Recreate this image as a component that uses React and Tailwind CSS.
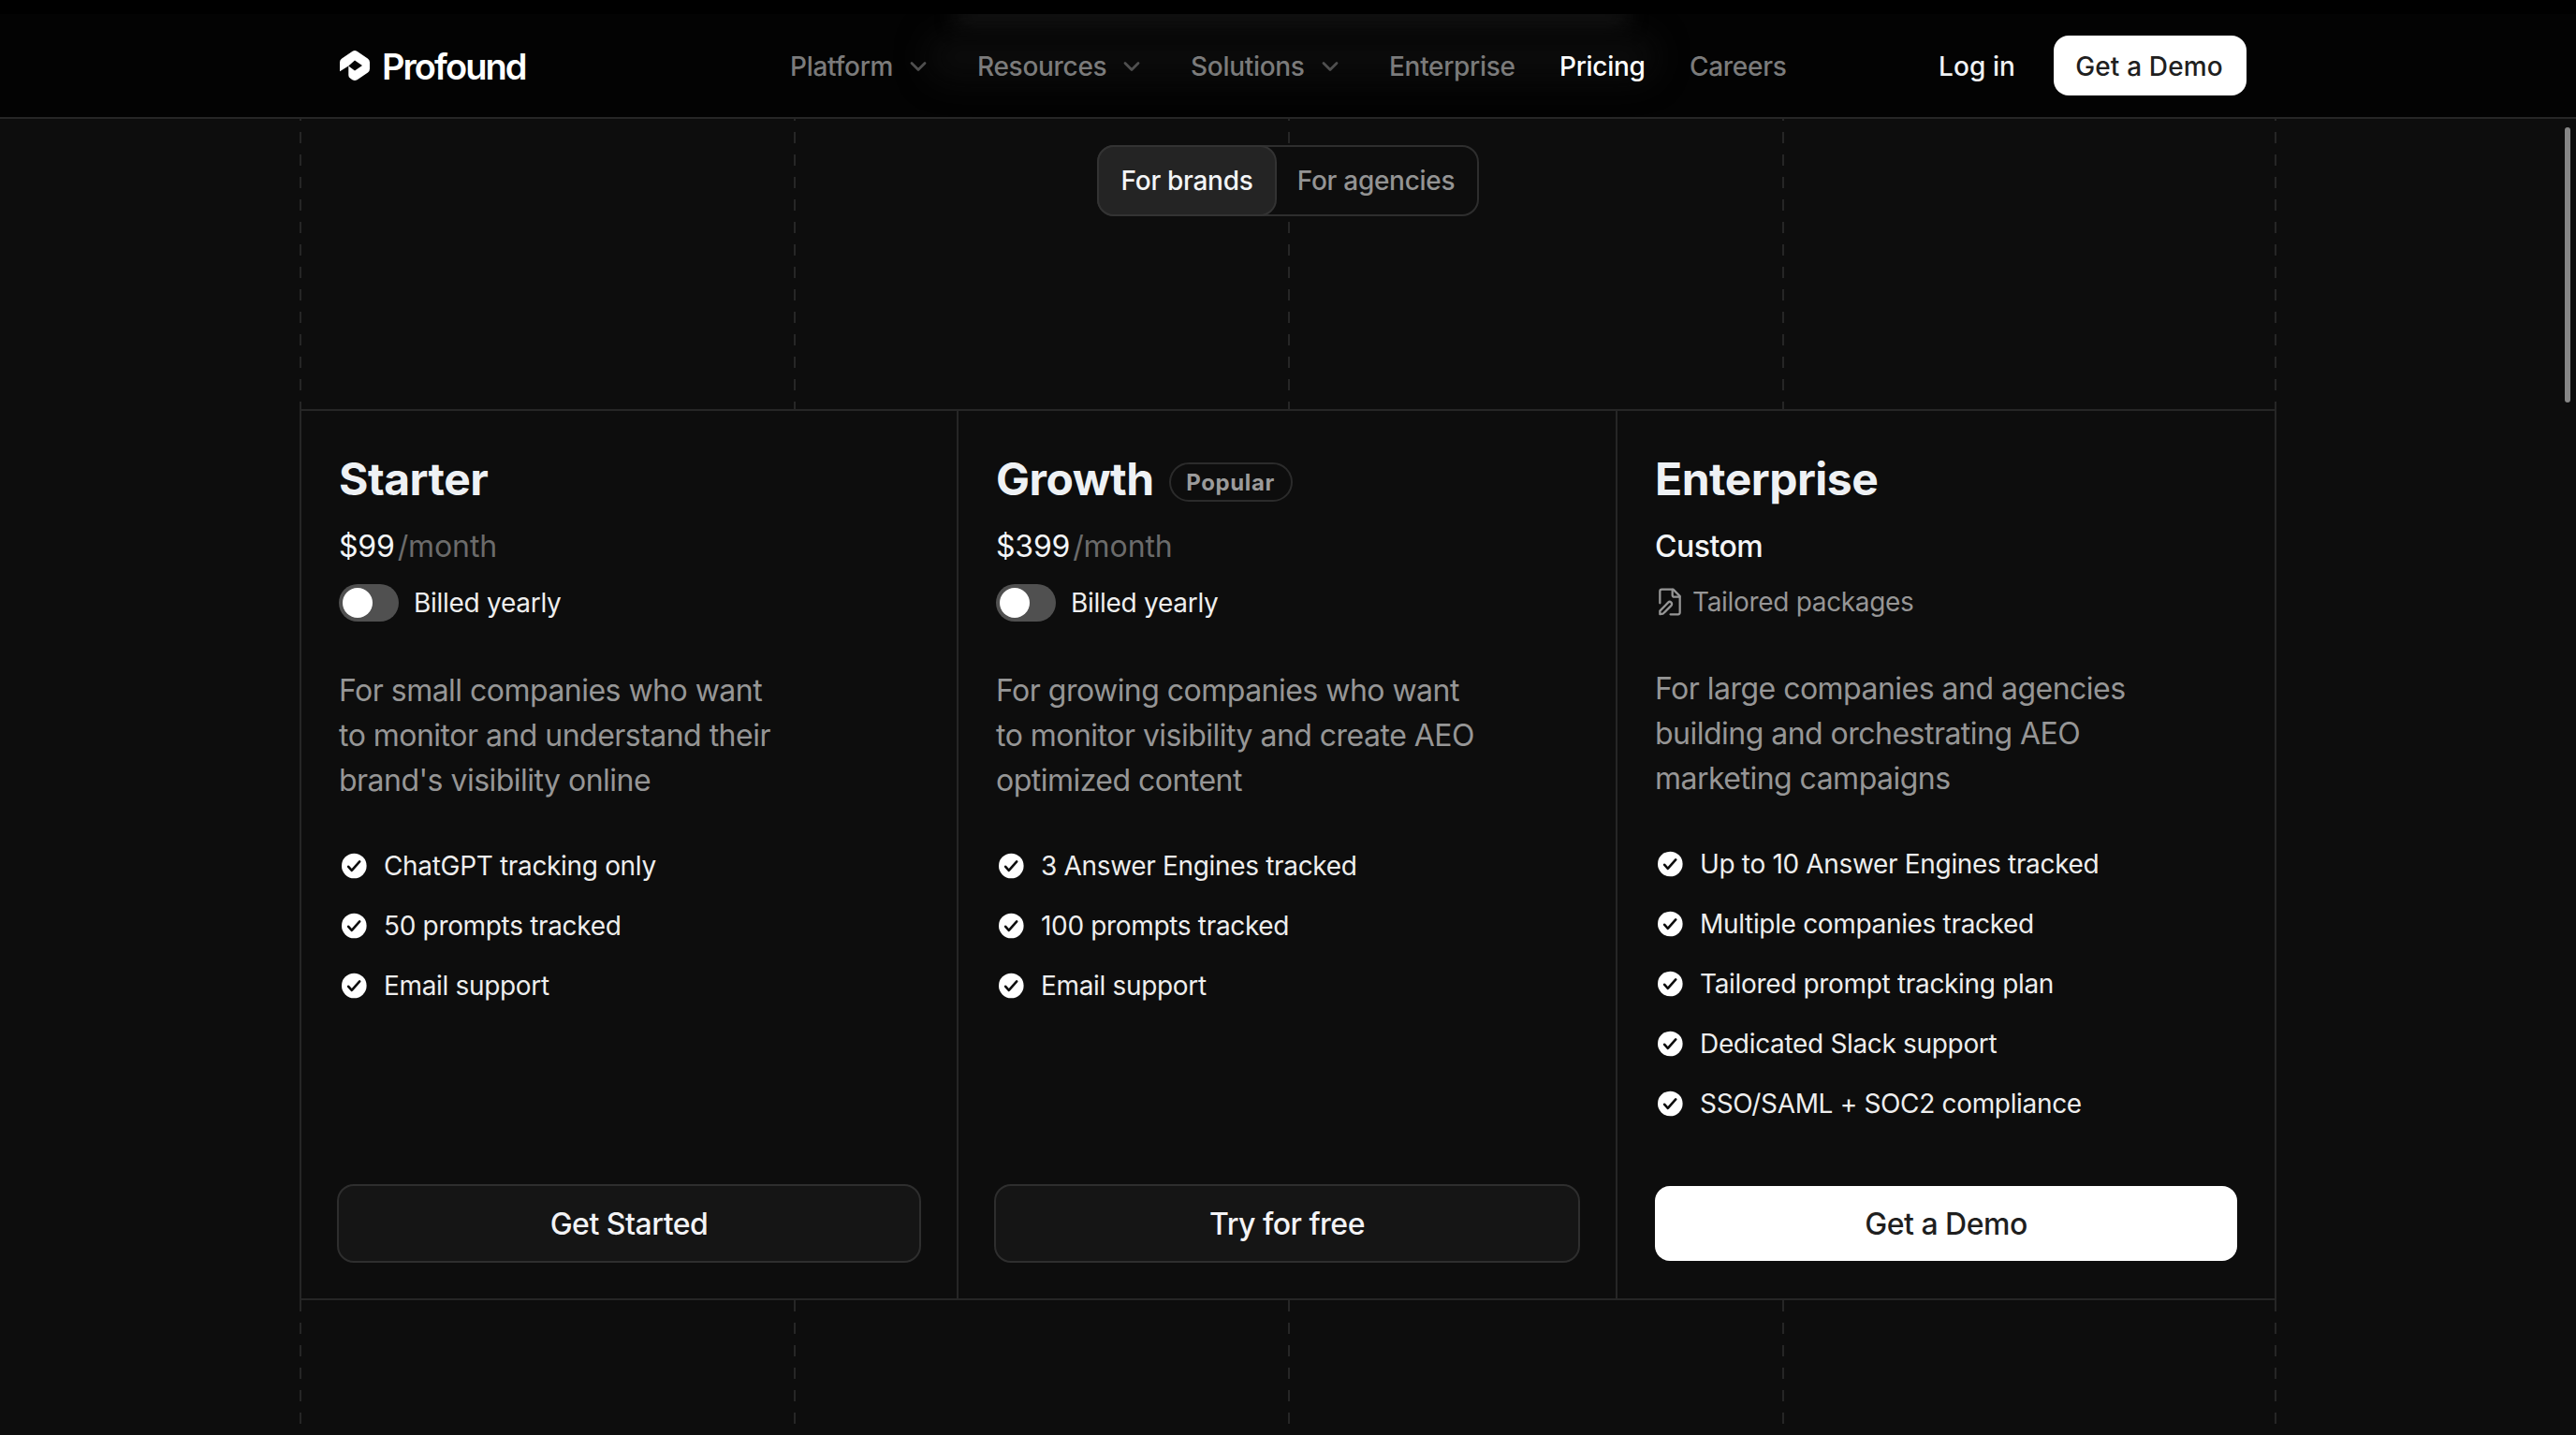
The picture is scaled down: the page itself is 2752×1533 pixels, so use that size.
import React from "react";
import { ChevronDown } from "lucide-react";

const navItems = [
    { label: "Platform", menu: true, width: "w-[110px]" },
    { label: "Resources", menu: true, width: "w-[138px]" },
    { label: "Solutions", menu: true, width: "w-[122px]" },
    { label: "Enterprise", width: "w-[133px]" },
    { label: "Pricing", active: true, width: "w-[90px]" },
    { label: "Careers", width: "w-[104px]" },
];

const plans = [
    {
        name: "Starter",
        price: "$99",
        width: "w-[702px]",
        ctaWidth: "w-[624px]",
        description: ["For small companies who want", "to monitor and understand their", "brand's visibility online"],
        features: ["ChatGPT tracking only", "50 prompts tracked", "Email support"],
        cta: "Get Started",
    },
    {
        name: "Growth",
        popular: true,
        price: "$399",
        width: "w-[704px]",
        ctaWidth: "w-[626px]",
        description: ["For growing companies who want", "to monitor visibility and create AEO", "optimized content"],
        features: ["3 Answer Engines tracked", "100 prompts tracked", "Email support"],
        cta: "Try for free",
    },
    {
        name: "Enterprise",
        custom: true,
        width: "w-[704px]",
        description: ["For large companies and agencies", "building and orchestrating AEO", "marketing campaigns"],
        features: [
            "Up to 10 Answer Engines tracked",
            "Multiple companies tracked",
            "Tailored prompt tracking plan",
            "Dedicated Slack support",
            "SSO/SAML + SOC2 compliance",
        ],
        cta: "Get a Demo",
    },
];

const Logo = () => (
    <svg className="w-8 h-8 shrink-0" viewBox="0 0 32 32" fill="#fff">
        <path
            fillRule="evenodd"
            d="M13.6 0.8Q16 -0.7 18.4 0.8L29.8 8.4Q32 9.9 32 12.4V19.4Q32 21.9 30 23.4L18.6 31.2Q16 32.8 13.4 31.2L11 29.6Q9.3 28.4 9.3 26.2V16.4L0 22.2V12.4Q0 9.9 2.2 8.4ZM16 10.4L9.3 16.4L16 21.4L24 15.9Z"
        />
    </svg>
);

const FilePen = () => (
    <svg className="mt-px w-8 h-8" viewBox="0 0 24 24" fill="none" stroke="currentColor" strokeWidth="1.7" strokeLinecap="round" strokeLinejoin="round">
        <path d="M12.4 22H18.5a1.5 1.5 0 0 0 1.5-1.5V7.4L14.6 2H5.5A1.5 1.5 0 0 0 4 3.5V13" />
        <path d="M14 2.2V6.5a1.5 1.5 0 0 0 1.5 1.5H19.8" />
        <path d="M4 21.8V19.2L10.6 12.5a1.7 1.7 0 0 1 2.5 2.4L6.6 21.4Z" />
    </svg>
);

const Check = () => (
    <svg className="w-8 h-8 shrink-0" viewBox="0 0 32 32" fill="none">
        <circle cx="16.3" cy="16" r="13.3" fill="#fff" />
        <path d="M10.2 16.8L13.8 20.8L22.2 11.4" stroke="#0d0d0d" strokeWidth="2.6" strokeLinecap="round" strokeLinejoin="round" />
    </svg>
);

const Plan = ({ plan }) => (
    <div className={`flex shrink-0 flex-col border-r-2 border-[#262626] pb-[38px] pl-10 ${plan.width}`}>
        <div className="mt-[38px] flex h-[70px] items-center">
            <h2 className="text-[48px] font-bold leading-[70px] tracking-[-0.5px] text-[#eef1f4] whitespace-nowrap">{plan.name}</h2>
            {plan.popular && (
                <span className="mt-[6px] ml-4 flex h-[42px] w-[132px] items-center justify-center rounded-full border-2 border-[#2b2b2b] pt-px text-[24px] font-bold tracking-[0.6px] text-[#9b9b9b]">
                    Popular
                </span>
            )}
        </div>

        <div className="mt-[13px] flex h-12 items-center text-[32px] text-[#f3f5f7]">
            {plan.custom ? (
                <span className="font-medium tracking-[-0.5px]">Custom</span>
            ) : (
                <>
                    <span className="tracking-[-0.2px]">{plan.price}</span>
                    <span className="ml-[3px] tracking-[-0.1px] text-[#6b6b6b]">/month</span>
                </>
            )}
        </div>

        {plan.custom ? (
            <div className="mt-[14px] flex h-10 items-center gap-2 pt-px text-[28px] tracking-[-0.32px] text-[#969696]">
                <FilePen />
                <span>Tailored packages</span>
            </div>
        ) : (
            <div className="mt-4 flex h-10 items-center gap-4 text-[28px] tracking-[-0.28px] text-[#eeeeee]">
                <span className="flex h-10 w-16 items-center rounded-full bg-[#505050] p-1">
                    <span className="h-8 w-8 rounded-full bg-white" />
                </span>
                <span>Billed yearly</span>
            </div>
        )}

        <div className="mt-[50px] text-[32px] leading-[48px] tracking-[-0.52px] text-[#969696] whitespace-nowrap">
            {plan.description.map((line) => (
                <p key={line}>{line}</p>
            ))}
        </div>

        <ul className="mt-[47px] flex flex-col gap-6">
            {plan.features.map((feature) => (
                <li key={feature} className="flex h-10 items-center gap-4 text-[28px] tracking-[-0.33px] text-[#eeeeee] whitespace-nowrap">
                    <Check />
                    <span>{feature}</span>
                </li>
            ))}
        </ul>

        {plan.custom ? (
            <button className="mt-auto mb-[2px] h-20 w-[622px] rounded-2xl bg-white pt-[2px] text-[32px] font-medium tracking-[-0.5px] text-[#1f1f1f]">
                {plan.cta}
            </button>
        ) : (
            <button
                className={`mt-auto -ml-[2px] h-[84px] rounded-[18px] border-2 border-[#2e2e2e] bg-[#151515] pt-[2px] text-[32px] font-medium tracking-[-0.5px] text-[#f3f3f5] ${plan.ctaWidth}`}
            >
                {plan.cta}
            </button>
        )}
    </div>
);

const App = () => {
    return (
        <div className="relative flex h-[1533px] w-[2752px] flex-col overflow-hidden bg-[#0d0d0d] font-['Inter',sans-serif]">
            {/* Dashed guide lines */}
            <div className="absolute inset-y-0 left-[320px] flex w-[2112px]">
                {[0, 1, 2, 3, 4].map((i) => (
                    <div key={i} className="flex w-[528px] shrink-0 last:-ml-[2px] last:w-[2px]">
                        <div className="w-[2px] bg-[repeating-linear-gradient(to_bottom,#262626_0px,#262626_12px,transparent_12px,transparent_24px)] bg-[position:0_21px] bg-[size:2px_24px]" />
                    </div>
                ))}
            </div>

            {/* Header */}
            <header className="relative h-[127px] shrink-0 overflow-hidden border-b-2 border-[#262626] bg-[#030303] pt-[15px]">
                {/* Content scrolled behind the blurred bar */}
                <div className="absolute left-[1020px] top-[4px] h-[26px] w-[720px] rounded-full bg-[#131313] blur-[10px]" />
                <div className="absolute left-[990px] top-[36px] h-[50px] w-[780px] rounded-full bg-[#0b0b0b] blur-[16px]" />
                <div className="absolute inset-x-0 top-0 h-[15px] bg-black" />
                <div className="relative flex h-[110px] items-center pl-[363px] text-[28px] font-medium">
                    <div className="flex w-[481px] items-center gap-[13px]">
                        <Logo />
                        <span className="pt-[2px] text-[38px] font-semibold leading-none tracking-[-1.95px] text-white">Profound</span>
                    </div>
                    <nav className="flex items-center gap-[49px] pt-px tracking-[-0.3px] text-[#7b7b7b]">
                        {navItems.map((item) => (
                            <div key={item.label} className={item.active ? "flex items-center text-white" : "flex items-center"}>
                                <span className={`${item.width} whitespace-nowrap`}>{item.label}</span>
                                {item.menu && <ChevronDown className="ml-[13px] h-7 w-7 text-[#4f4f4f]" strokeWidth={2.4} />}
                            </div>
                        ))}
                    </nav>
                    <span className="ml-[162px] w-[82px] whitespace-nowrap pt-px tracking-[0.1px] text-[#f0f2f4]">Log in</span>
                    <button className="ml-[41px] h-16 w-[206px] rounded-2xl bg-white pt-px pr-[2px] tracking-[0.15px] text-[#1f1f1f]">Get a Demo</button>
                </div>
            </header>

            {/* Audience switch */}
            <div className="relative mt-7 ml-[1172px] flex h-[76px] w-[408px] shrink-0 items-center rounded-[18px] border-2 border-[#2e2e2e] bg-[#0d0d0d] text-[28px] font-medium tracking-[-0.3px]">
                <div className="-my-[2px] -ml-[2px] flex h-[76px] w-[192px] items-center justify-center rounded-[18px] border-2 border-[#333333] bg-[#242424] text-[#f3f5f7]">
                    For brands
                </div>
                <div className="flex flex-1 items-center justify-center pr-[2px] text-[#949494]">For agencies</div>
            </div>

            {/* Pricing cards */}
            <div className="relative mt-[206px] ml-[320px] flex h-[952px] w-[2112px] shrink-0 border-y-2 border-l-2 border-[#262626] bg-[#0d0d0d]">
                {plans.map((plan) => (
                    <Plan key={plan.name} plan={plan} />
                ))}
            </div>

            {/* Scrollbar thumb */}
            <div className="absolute right-[6px] top-[136px] h-[294px] w-[6px] rounded-full bg-[#868686]" />
        </div>
    );
};

export default App;
